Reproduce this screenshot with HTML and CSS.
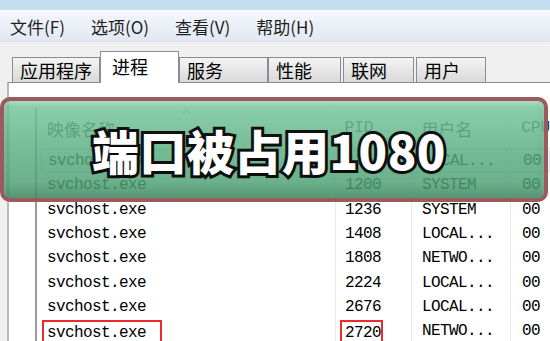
FILE: index.html
```html
<!DOCTYPE html>
<html lang="zh-CN">
<head>
    <meta charset="UTF-8">
    <meta name="viewport" content="width=device-width, initial-scale=1.0">
    <title>端口被占用1080</title>
    <link rel="stylesheet" href="styles.css">
</head>
<body>
    <div class="titlebar"></div>

    <!-- Menu -->
    <div class="menubar">
        <span>文件(F)</span>
        <span>选项(O)</span>
        <span>查看(V)</span>
        <span>帮助(H)</span>
    </div>

    <!-- Tabs -->
    <div class="tabs">
        <div class="tab">应用程序</div>
        <div class="tab active">进程</div>
        <div class="tab">服务</div>
        <div class="tab">性能</div>
        <div class="tab">联网</div>
        <div class="tab">用户</div>
    </div>

    <div class="panel">
        <div class="list">
            <div class="row head">
                <div class="cell name">映像名称<span class="sort"></span></div>
                <div class="cell pid">PID</div>
                <div class="cell user">用户名</div>
                <div class="cell cpu">CPU</div>
            </div>
            <div class="row hot">
                <div class="cell name">svchost.exe</div>
                <div class="cell pid">1152</div>
                <div class="cell user">LOCAL...</div>
                <div class="cell cpu">00</div>
            </div>
            <div class="row">
                <div class="cell name">svchost.exe</div>
                <div class="cell pid">1200</div>
                <div class="cell user">SYSTEM</div>
                <div class="cell cpu">00</div>
            </div>
            <div class="row">
                <div class="cell name">svchost.exe</div>
                <div class="cell pid">1236</div>
                <div class="cell user">SYSTEM</div>
                <div class="cell cpu">00</div>
            </div>
            <div class="row">
                <div class="cell name">svchost.exe</div>
                <div class="cell pid">1408</div>
                <div class="cell user">LOCAL...</div>
                <div class="cell cpu">00</div>
            </div>
            <div class="row">
                <div class="cell name">svchost.exe</div>
                <div class="cell pid">1808</div>
                <div class="cell user">NETWO...</div>
                <div class="cell cpu">00</div>
            </div>
            <div class="row">
                <div class="cell name">svchost.exe</div>
                <div class="cell pid">2224</div>
                <div class="cell user">LOCAL...</div>
                <div class="cell cpu">00</div>
            </div>
            <div class="row">
                <div class="cell name">svchost.exe</div>
                <div class="cell pid">2676</div>
                <div class="cell user">LOCAL...</div>
                <div class="cell cpu">00</div>
            </div>
            <div class="row">
                <div class="cell name"><span class="mark name-mark">svchost.exe</span></div>
                <div class="cell pid"><span class="mark pid-mark">2720</span></div>
                <div class="cell user">NETWO...</div>
                <div class="cell cpu">00</div>
            </div>
        </div>
    </div>

    <!-- Title banner over the screenshot -->
    <div class="banner"><span>端口被占用1080</span></div>
</body>
</html>
```

FILE: styles.css
```css
body {
    margin: 0;
    width: 550px;
    height: 341px;
    overflow: hidden;
    position: relative;
    background: #f0f0f0;
    font-family: "Noto Sans CJK SC", "Noto Sans", sans-serif;
    color: #000;
}

.titlebar {
    height: 10px;
    background: #c6dcf1;
}

.menubar {
    box-sizing: border-box;
    height: 32px;
    border-top: 2px solid #fbfcfe;
    border-bottom: 1px solid #dde2ea;
    background: linear-gradient(to bottom, #f3f6fb, #e2e8f2);
    display: flex;
    align-items: center;
    gap: 26px;
    padding-left: 10px;
    font-size: 17px;
    color: #1e1e1e;
}

.tabs {
    height: 40px;
    display: flex;
    align-items: flex-end;
    padding-left: 12px;
}

.tab {
    box-sizing: border-box;
    height: 25px;
    border: 1px solid #898c95;
    border-bottom: none;
    background: linear-gradient(to bottom, #f4f4f4, #d9d9d9);
    font-size: 18px;
    line-height: 24px;
    padding-left: 7px;
}

.tab:nth-child(1) { width: 88px; }
.tab:nth-child(3) { width: 89px; }
.tab:nth-child(4) { width: 73px; }
.tab:nth-child(5) { width: 71px; margin-left: 2px; }
.tab:nth-child(6) { width: 70px; margin-left: 2px; }

.tab.active {
    width: 79px;
    height: 32px;
    margin-bottom: -1px;
    background: #fff;
    padding-left: 11px;
    line-height: 28px;
    position: relative;
    z-index: 1;
}

.panel {
    margin-left: 7px;
    height: 233px;
    background: #fff;
    border-top: 1px solid #898c95;
    border-left: 2px solid #b8b8b8;
    padding: 25px 0 0 26px;
    overflow: hidden;
}

.list {
    border-left: 2px solid #9a9a9a;
    font-family: "Liberation Mono", monospace;
    font-size: 16px;
    letter-spacing: -0.6px;
}

.row {
    display: flex;
    height: 24.3px;
}

.row.head {
    height: 41px;
    border-bottom: 1px solid #e3ebf5;
    box-sizing: border-box;
    letter-spacing: 0;
    color: #1e395b;
}

.row.head .name {
    font-family: "Noto Sans CJK SC", sans-serif;
    font-size: 17px;
    position: relative;
}

.row.head .user {
    font-family: "Noto Sans CJK SC", sans-serif;
    font-size: 17px;
}

.row.hot {
    box-sizing: border-box;
    margin-left: 3px;
    border: 1px solid #d3e2f3;
    border-radius: 3px;
    background: #f4f8fd;
}

.cell {
    box-sizing: border-box;
    display: flex;
    align-items: center;
    white-space: nowrap;
}

.name { width: 298px; padding-left: 10px; }
.pid  { width: 76px;  padding-left: 9px;  border-left: 1px solid #e3ebf5; }
.user { width: 99px;  padding-left: 10px; border-left: 1px solid #e3ebf5; }
.cpu  { flex: 1;      padding-left: 11px; border-left: 1px solid #e3ebf5; }

.row.hot .name { width: 295px; padding-left: 7px; }

.sort {
    position: absolute;
    left: 146px;
    top: 2px;
    width: 6px;
    height: 6px;
    border-left: 1px solid #9aa8b8;
    border-top: 1px solid #9aa8b8;
    transform: rotate(45deg);
}

.mark {
    align-self: stretch;
    margin-top: 1px;
    height: 25px;
    box-sizing: border-box;
    display: flex;
    align-items: center;
    border: 2px solid #ec2a2e;
    margin-left: -5px;
    padding-left: 3px;
}

.name-mark { padding-right: 14px; }
.pid-mark { padding-right: 0; }

.banner {
    position: absolute;
    left: 0;
    top: 97px;
    width: 548px;
    height: 105px;
    box-sizing: border-box;
    border: 4px solid #9b5a5c;
    border-radius: 10px;
    background: linear-gradient(to bottom, rgba(125, 200, 160, 0.85), rgba(92, 178, 133, 0.82) 40%, rgba(74, 156, 112, 0.85));
    box-shadow: inset 0 3px 4px rgba(255, 255, 255, 0.25), inset 0 -8px 10px rgba(0, 0, 0, 0.12);
    display: flex;
    align-items: center;
    justify-content: center;
    padding-right: 10px;
}

.banner span {
    font-family: "Noto Sans CJK SC", sans-serif;
    font-size: 47px;
    font-weight: 900;
    letter-spacing: 0.5px;
    color: #fff;
    -webkit-text-stroke: 6px #111;
    paint-order: stroke fill;
    text-shadow: 1px 2px 2px rgba(0, 0, 0, 0.35);
}
```
